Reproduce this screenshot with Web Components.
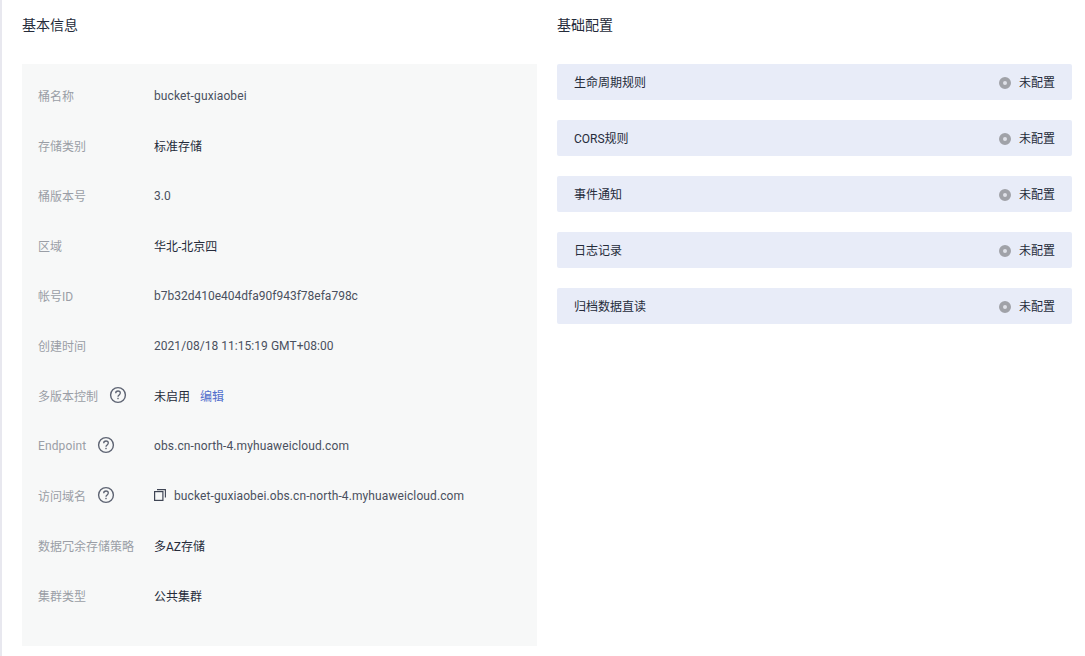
<!DOCTYPE html>
<html lang="zh">
<head>
<meta charset="utf-8">
<title>基本信息</title>
<style>
    html, body { margin: 0; background: #fff; }
    body { font-family: Roboto, "Noto Sans CJK SC", sans-serif; color: #252b3a; }
</style>
</head>
<body>
<bucket-page>
    <div slot="left">
        <info-row label="桶名称" latin="0.12">bucket-guxiaobei</info-row>
        <info-row label="存储类别">标准存储</info-row>
        <info-row label="桶版本号" latin="0">3.0</info-row>
        <info-row label="区域">华北-北京四</info-row>
        <info-row label="帐号ID" latin="0">b7b32d410e404dfa90f943f78efa798c</info-row>
        <info-row label="创建时间" latin="0.04">2021/08/18 11:15:19 GMT+08:00</info-row>
        <info-row label="多版本控制" help="11">未启用<a-link>编辑</a-link></info-row>
        <info-row label="Endpoint" label-latin help="11" latin="0.12">obs.cn-north-4.myhuaweicloud.com</info-row>
        <info-row label="访问域名" help="11" copy latin="0.1">bucket-guxiaobei.obs.cn-north-4.myhuaweicloud.com</info-row>
        <info-row label="数据冗余存储策略">多AZ存储</info-row>
        <info-row label="集群类型">公共集群</info-row>
    </div>
    <div slot="right">
        <config-item>生命周期规则</config-item>
        <config-item>CORS规则</config-item>
        <config-item>事件通知</config-item>
        <config-item>日志记录</config-item>
        <config-item>归档数据直读</config-item>
    </div>
</bucket-page>

<script>
class BucketPage extends HTMLElement {
    constructor() {
        super();
        this.attachShadow({ mode: 'open' });
    }

    connectedCallback() {
        this.shadowRoot.innerHTML = `
        <style>
            :host {
                display: grid;
                grid-template-columns: 515px 515px;
                column-gap: 20px;
                height: 656px;
                box-sizing: border-box;
                padding-left: 22px;
                position: relative;
                overflow: hidden;
            }
            .strip {
                position: absolute;
                left: 0;
                top: 0;
                bottom: 0;
                width: 2px;
                background: #e8e8ef;
            }
            h2 {
                margin: 0;
                height: 64px;
                padding-top: 15px;
                box-sizing: border-box;
                font-size: 14px;
                font-weight: 400;
                line-height: 20px;
                color: #252b3a;
            }
            .card {
                background: #f7f8f8;
                height: 582px;
                padding: 6px 16px 0;
                box-sizing: border-box;
            }
        </style>
        <div class="strip"></div>
        <section>
            <h2>基本信息</h2>
            <div class="card"><slot name="left"></slot></div>
        </section>
        <section>
            <h2>基础配置</h2>
            <slot name="right"></slot>
        </section>
        `;
    }
}

class InfoRow extends HTMLElement {
    constructor() {
        super();
        this.attachShadow({ mode: 'open' });
    }

    connectedCallback() {
        let label = this.getAttribute('label') || '';
        let help = this.getAttribute('help');
        let copy = this.hasAttribute('copy');
        let latin = this.getAttribute('latin');
        let labelLatin = this.hasAttribute('label-latin');

        this.shadowRoot.innerHTML = `
        <style>
            :host {
                display: flex;
                align-items: center;
                height: 50px;
                font-size: 12px;
            }
            .label {
                width: 116px;
                flex: none;
                display: flex;
                align-items: center;
                color: #9a9ea6;
                white-space: nowrap;
            }
            .help {
                flex: none;
                display: block;
            }
            .value {
                display: flex;
                align-items: center;
                color: #252b3a;
                white-space: nowrap;
            }
            .copy {
                flex: none;
                margin-right: 8px;
            }
            /* roboto sits a pixel high next to the cjk rows */
            .latin {
                padding-top: 2px;
            }
            .value .latin {
                color: #4a505e;
            }
        </style>
        <div class="label">
            <span class="${labelLatin ? 'latin' : ''}" style="${labelLatin ? 'letter-spacing:.12px' : ''}">${label}</span>
            ${help ? `
            <svg class="help" style="margin-left:${help}px" width="18" height="18" viewBox="0 0 18 18" fill="none">
                <circle cx="9" cy="9" r="7.4" stroke="#5e6473" stroke-width="1.4"/>
                <path d="M6.7 7.2c0-1.3 1-2.2 2.3-2.2s2.3.9 2.3 2.1c0 1-.6 1.5-1.3 2-.7.4-1 .8-1 1.6" stroke="#5e6473" stroke-width="1.3"/>
                <rect x="8.3" y="11.8" width="1.4" height="1.4" fill="#5e6473"/>
            </svg>` : ''}
        </div>
        <div class="value">
            ${copy ? `
            <svg class="copy" width="12" height="12" viewBox="0 0 12 12" fill="none">
                <rect x="0.6" y="2.6" width="8.3" height="8.8" stroke="#3f4554" stroke-width="1.2"/>
                <path d="M3 .6h8.4V8.5" stroke="#3f4554" stroke-width="1.1"/>
            </svg>` : ''}
            <span class="${latin !== null ? 'latin' : ''}" style="${latin ? `letter-spacing:${latin}px` : ''}"><slot></slot></span>
        </div>
        `;
    }
}

class ALink extends HTMLElement {
    constructor() {
        super();
        this.attachShadow({ mode: 'open' });
    }

    connectedCallback() {
        this.shadowRoot.innerHTML = `
        <style>
            :host {
                display: inline-block;
                margin-left: 10px;
                color: #526ecc;
            }
        </style>
        <slot></slot>
        `;
    }
}

class ConfigItem extends HTMLElement {
    constructor() {
        super();
        this.attachShadow({ mode: 'open' });
    }

    connectedCallback() {
        this.shadowRoot.innerHTML = `
        <style>
            :host {
                display: flex;
                align-items: center;
                justify-content: space-between;
                height: 36px;
                margin-bottom: 20px;
                padding: 0 17px;
                box-sizing: border-box;
                background: #e8ecf8;
                border-radius: 2px;
                font-size: 12px;
                color: #252b3a;
            }
            .status {
                display: flex;
                align-items: center;
                gap: 8px;
            }
            .dot {
                width: 4px;
                height: 4px;
                margin-top: 2px;
                border: 4px solid #a0a2a8;
                border-radius: 50%;
                background: #dfe1e8;
            }
            .up {
                padding-bottom: 2px;
            }
        </style>
        <span class="up"><slot></slot></span>
        <span class="status"><span class="dot"></span><span class="up">未配置</span></span>
        `;
    }
}

customElements.define('bucket-page', BucketPage);
customElements.define('info-row', InfoRow);
customElements.define('a-link', ALink);
customElements.define('config-item', ConfigItem);
</script>
</body>
</html>
